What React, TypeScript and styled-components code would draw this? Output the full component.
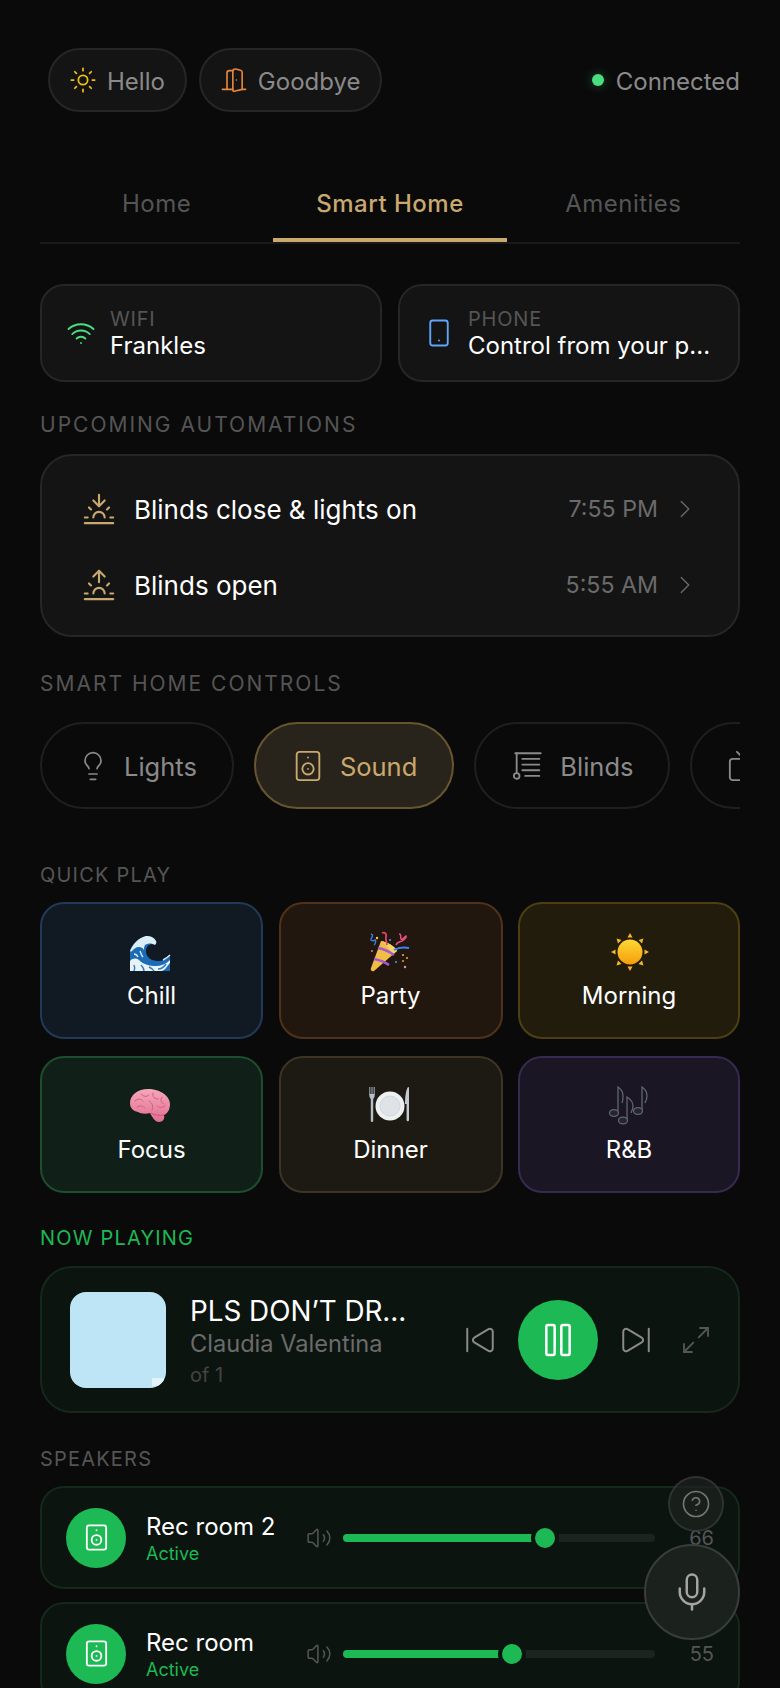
import React from "react";
import styled, { createGlobalStyle } from "styled-components";
import {
  Blinds,
  ChevronRight,
  CircleHelp,
  DoorOpen,
  Lightbulb,
  Maximize2,
  Mic,
  Pause,
  SkipBack,
  SkipForward,
  Smartphone,
  Speaker,
  Sun,
  Sunrise,
  Sunset,
  Tv,
  Volume2,
  Wifi,
} from "lucide-react";

const GOLD = "#c9a96e";
const GREEN = "#1db954";

const GlobalStyle = createGlobalStyle`
  html, body {
    margin: 0;
    padding: 0;
    background: #0a0a0a;
    overflow: hidden;
  }
  * {
    box-sizing: border-box;
  }
  body {
    font-family: "Inter", "Liberation Sans", sans-serif;
    color: #fff;
  }
`;

const Page = styled.div`
  position: relative;
  width: 780px;
  height: 1688px;
  padding: 48px 40px 0;
  overflow: hidden;
  background: #0a0a0a;
`;

const TopBar = styled.div`
  display: flex;
  align-items: center;
  justify-content: space-between;
  padding-left: 8px;
  height: 64px;
`;

const Greetings = styled.div`
  display: flex;
  gap: 12px;
`;

const GreetingPill = styled.div`
  display: flex;
  align-items: center;
  gap: 10px;
  height: 64px;
  padding: 0 20px 0 19px;
  border-radius: 32px;
  border: 2px solid #262626;
  background: #141414;
  color: #8a8a8a;
  font-size: 24px;
`;

const LoweredText = styled.span`
  padding-top: 2px;
`;

const Status = styled.div`
  display: flex;
  align-items: center;
  gap: 12px;
  color: #8a8a8a;
  font-size: 24px;
`;

const StatusDot = styled.span`
  width: 12px;
  height: 12px;
  border-radius: 50%;
  background: #4ade80;
  box-shadow: 0 0 12px rgba(74, 222, 128, 0.35);
`;

const Tabs = styled.div`
  display: grid;
  grid-template-columns: repeat(3, 1fr);
  margin-top: 58px;
  height: 74px;
  border-bottom: 2px solid #1a1a1a;
`;

const Tab = styled.div<{ $active?: boolean }>`
  display: flex;
  align-items: flex-start;
  justify-content: center;
  padding-top: 19px;
  font-size: 24px;
  font-weight: ${({ $active }) => ($active ? 500 : 400)};
  letter-spacing: 0.5px;
  color: ${({ $active }) => ($active ? GOLD : "#555")};
  border-bottom: 4px solid ${({ $active }) => ($active ? GOLD : "transparent")};
  height: 72px;
`;

const InfoRow = styled.div`
  display: grid;
  grid-template-columns: 1fr 1fr;
  gap: 16px;
  margin-top: 40px;
`;

const InfoCard = styled.div`
  display: flex;
  align-items: center;
  gap: 14px;
  height: 98px;
  padding: 0 24px;
  border-radius: 24px;
  border: 2px solid #262626;
  background: #141414;
`;

const InfoText = styled.div`
  display: flex;
  flex-direction: column;
  min-width: 0;
`;

const InfoLabel = styled.div`
  padding-top: 1px;
  font-size: 20px;
  line-height: 24px;
  letter-spacing: 0.8px;
  color: #555;
`;

const InfoValue = styled.div`
  font-size: 24px;
  line-height: 29px;
  white-space: nowrap;
`;

const SectionLabel = styled.div<{ $top: number; $bottom: number; $small?: boolean; $green?: boolean }>`
  margin-top: ${({ $top }) => $top}px;
  margin-bottom: ${({ $bottom }) => $bottom}px;
  font-size: ${({ $small }) => ($small ? 20 : 21)}px;
  line-height: 24px;
  letter-spacing: ${({ $small }) => ($small ? 1.2 : 2)}px;
  color: ${({ $green }) => ($green ? GREEN : "#555")};
`;

const AutomationCard = styled.div`
  height: 183px;
  padding: 15px 38px 0 40px;
  border-radius: 32px;
  border: 2px solid #262626;
  background: #141414;
`;

const AutomationRow = styled.div`
  height: 76px;
  display: flex;
  align-items: center;
  font-size: 26px;
`;

const AutomationName = styled.span`
  flex: 1;
  margin-left: 18px;
`;

const AutomationTime = styled.span`
  font-size: 23.2px;
  color: #6b6b6b;
`;

const Chevron = styled(ChevronRight)`
  margin-left: 12px;
  color: #6b6b6b;
`;

const ControlRow = styled.div`
  display: flex;
  gap: 20px;
  overflow: hidden;
`;

const ControlPill = styled.div<{ $active?: boolean }>`
  flex: none;
  display: flex;
  align-items: center;
  gap: 15px;
  height: 87px;
  padding: 0 35px;
  border-radius: 44px;
  border: 2px solid ${({ $active }) => ($active ? "#66552f" : "#1f1f1f")};
  background: ${({ $active }) => ($active ? "#29241b" : "transparent")};
  color: ${({ $active }) => ($active ? GOLD : "#8a8a8a")};
  font-size: 25.5px;
`;

const TileGrid = styled.div`
  display: grid;
  grid-template-columns: 223px 224px 222px;
  grid-auto-rows: 137px;
  justify-content: space-between;
  row-gap: 17px;
`;

const Tile = styled.div<{ $bg: string; $line: string }>`
  display: flex;
  flex-direction: column;
  align-items: center;
  justify-content: center;
  gap: 8px;
  padding-top: 3px;
  border-radius: 24px;
  border: 2px solid ${({ $line }) => $line};
  background: ${({ $bg }) => $bg};
  font-size: 24px;
  line-height: 30px;

  svg {
    overflow: visible;
  }
`;

const NowPlaying = styled.div`
  display: flex;
  align-items: center;
  height: 147px;
  padding: 0 26px 0 28px;
  border-radius: 32px;
  border: 2px solid #14291b;
  background: #0c1410;
`;

const Artwork = styled.div`
  position: relative;
  flex: none;
  width: 96px;
  height: 96px;
  border-radius: 16px;
  background: #bde5f5;
  overflow: hidden;
`;

const ArtworkMark = styled.span`
  position: absolute;
  right: 2px;
  bottom: 2px;
  width: 12px;
  height: 8px;
  background: #e3f3fa;
`;

const TrackInfo = styled.div`
  flex: 1;
  margin-left: 24px;
  min-width: 0;
`;

const TrackTitle = styled.div`
  padding-top: 1px;
  font-size: 27.8px;
  line-height: 34px;
  white-space: nowrap;
`;

const TrackArtist = styled.div`
  padding-top: 1px;
  font-size: 23.6px;
  line-height: 29px;
  color: #6b6b6b;
`;

const TrackCount = styled.div`
  margin-top: 5px;
  font-size: 20px;
  line-height: 24px;
  color: #444;
`;

const Controls = styled.div`
  display: flex;
  align-items: center;
  color: #8a8a8a;
`;

const PlayButton = styled.div`
  display: flex;
  align-items: center;
  justify-content: center;
  width: 80px;
  height: 80px;
  margin: 0 21px;
  border-radius: 50%;
  background: ${GREEN};
  color: #fff;
`;

const ExpandIcon = styled(Maximize2)`
  margin-left: 27px;
  color: #555;
`;

const SpeakerCard = styled.div`
  display: flex;
  align-items: center;
  height: 103px;
  margin-bottom: 13px;
  padding: 0 24px;
  border-radius: 24px;
  border: 2px solid #14291b;
  background: #0c1410;
`;

const SpeakerBadge = styled.div`
  flex: none;
  display: flex;
  align-items: center;
  justify-content: center;
  width: 60px;
  height: 60px;
  border-radius: 50%;
  background: ${GREEN};
  color: #fff;
`;

const SpeakerInfo = styled.div`
  width: 160px;
  margin-left: 20px;
`;

const SpeakerName = styled.div`
  padding-top: 1px;
  font-size: 24px;
  line-height: 29px;
  white-space: nowrap;
`;

const SpeakerState = styled.div`
  padding-top: 2px;
  font-size: 18px;
  line-height: 22px;
  color: ${GREEN};
`;

const VolumeIcon = styled(Volume2)`
  flex: none;
  color: #555;
`;

const Slider = styled.div`
  position: relative;
  width: 312px;
  height: 8px;
  margin-left: 11px;
  border-radius: 4px;
  background: #1c2420;
`;

const SliderFill = styled.div`
  height: 100%;
  border-radius: 4px;
  background: ${GREEN};
`;

const SliderThumb = styled.div`
  position: absolute;
  top: 50%;
  width: 20px;
  height: 20px;
  border-radius: 50%;
  background: ${GREEN};
  box-shadow: 0 0 0 4px #0c1410;
  transform: translate(-50%, -50%);
`;

const SpeakerValue = styled.div`
  flex: 1;
  text-align: right;
  font-size: 20px;
  color: #555;
`;

const HelpButton = styled.div`
  position: absolute;
  left: 668px;
  top: 1476px;
  display: flex;
  align-items: center;
  justify-content: center;
  width: 56px;
  height: 56px;
  border-radius: 50%;
  border: 2px solid rgba(90, 95, 92, 0.35);
  background: rgba(30, 34, 32, 0.7);
  color: #757575;
`;

const MicButton = styled.div`
  position: absolute;
  left: 644px;
  top: 1544px;
  display: flex;
  align-items: center;
  justify-content: center;
  width: 96px;
  height: 96px;
  border-radius: 50%;
  border: 2px solid #3a3e3b;
  background: #1b211d;
  color: #a5a5a5;
`;

function WaveEmoji() {
  return (
    <svg width="40" height="40" viewBox="2 -3 40 40">
      <path d="M0 35V14C3 8 8 2 16 0c4-.5 8 1 10 5l-1 4c-5-2-9 1-9 6 0 6 5 10 12 10 5 0 9-2 12-6v16z" fill="#1c6bb5" />
      <path d="M0 15C3 8 8 2 16 0c4 0 8 1 10 5 1 1 0 3-1 4-3-2-7-2-10 0-1 2-1 3-1 5-1-2-3-3-5-3-3 0-5 2-7 4-1 1-1 1-2 0z" fill="#dceef5" />
      <path d="M0 25c3-3 6-3 9-1 4 4 10 6 17 6 5 0 10-2 14-6v3c-3 3-5 8-9 8H0z" fill="#e8f3f7" />
      <path d="M4 29c1 2 1 4 0 6M11 29c2 2 3 4 3 6M19 31c2 1 4 2 5 4M28 33c3 0 6-2 8-5" stroke="#2c7cc4" strokeWidth="1.5" fill="none" />
      <path d="M4 18c2 0 3 1 4 3M10 15c1 2 1 4 3 6M33 24c2-1 4-2 7-5" stroke="#d7ebf4" strokeWidth="1.4" fill="none" />
    </svg>
  );
}

function PartyEmoji() {
  return (
    <svg width="40" height="40" viewBox="2 1 40 40">
      <path d="M2 36 12 9c6 1 14 5 16 10L5 39c-2 1-4-1-3-3z" fill="#efbe45" />
      <path d="M28 19 23 23C21 17 17 12 12 9c6 1 14 5 16 10z" fill="#f7d468" />
      <path d="M5 27c5 1 11 3 15 6M9 16c6 1 12 4 16 7" stroke="#a855d8" strokeWidth="2.6" fill="none" />
      <path d="M25 18c5-3 10-3 15-2" stroke="#3b82f6" strokeWidth="2" fill="none" />
      <path d="M13 1c3-1 5 1 4 4-1 3 1 5 1 8" stroke="#e2456b" strokeWidth="1.8" fill="none" />
      <path d="M2 2c3 1 1 3 0 5s3 2 4 1 1 4-1 5" stroke="#3b7fe0" strokeWidth="1.4" fill="none" />
      <path d="M30 2c3 0 1 4 2 5 2 1 4-3 5-3 1 1-2 4-4 5-3 1-5 1-6 4" stroke="#e24f80" strokeWidth="1.5" fill="none" />
      <circle cx="8" cy="6" r="1.2" fill="#f7c83c" />
      <circle cx="21" cy="8" r="1.1" fill="#4a90e8" />
      <circle cx="3" cy="19" r="1.1" fill="#e86a9a" />
      <circle cx="34" cy="23" r="1" fill="#f5b73d" />
      <circle cx="38" cy="26" r="1.1" fill="#f0a030" />
      <circle cx="27" cy="30" r="1.1" fill="#4a90e8" />
      <circle cx="34" cy="29" r="1" fill="#f0a030" />
      <circle cx="36" cy="35" r="1.2" fill="#ef8ab0" />
    </svg>
  );
}

function SunEmoji() {
  const rays = [0, 45, 90, 135, 180, 225, 270, 315];
  return (
    <svg width="40" height="40" viewBox="-1 0 40 40">
      <defs>
        <linearGradient id="sunFill" x1="0" y1="0" x2="0" y2="1">
          <stop offset="0" stopColor="#fdd835" />
          <stop offset="1" stopColor="#f59e0b" />
        </linearGradient>
      </defs>
      {rays.map((r) => (
        <path key={r} d="M17.500 4.500 20 0l2.500 4.500z" fill="#f8b62a" transform={`rotate(${r} 20 19)`} />
      ))}
      <circle cx="20" cy="19" r="12.500" fill="url(#sunFill)" />
    </svg>
  );
}

function BrainEmoji() {
  return (
    <svg width="40" height="40" viewBox="2 -2 40 40">
      <defs>
        <linearGradient id="brainFill" x1="0" y1="0" x2="0" y2="1">
          <stop offset="0" stopColor="#f6a6bc" />
          <stop offset="1" stopColor="#e26f90" />
        </linearGradient>
      </defs>
      <path d="M18 0C8 0 0 6 0 14c0 5 3 8 8 9 3 2 8 2 12 1 2 4 5 9 9 9 4 0 6-3 5-7 4-2 6-6 6-11C40 7 30 0 18 0z" fill="url(#brainFill)" />
      <path d="M5 12c3-3 6-2 8 0M11 5c2 3 6 3 8 1M23 4c-1 4 2 6 5 6M32 8c-2 3-1 6 2 7M7 18c3-2 6-1 8 1M19 12c3 2 5 5 3 9M27 17c2 2 5 2 8 0" stroke="#d0607f" strokeWidth="1" fill="none" strokeLinecap="round" />
      <path d="M21 24c3 2 8 3 13 2" stroke="#c9557a" strokeWidth="1" fill="none" />
    </svg>
  );
}

function PlateEmoji() {
  return (
    <svg width="40" height="40" viewBox="2 0 40 40">
      <path d="M.8 0v8M3 0v8M5.200 0v8" stroke="#a9b4bd" strokeWidth="1" />
      <path d="M.3 7c0 4 1 5 2.700 5s2.700-1 2.700-5z" fill="#b5bfc7" />
      <rect x="1.800" y="11" width="2.400" height="24" rx="1.200" fill="#b5bfc7" />
      <circle cx="21" cy="19" r="14.500" fill="#eef0f2" />
      <circle cx="21" cy="19" r="10" fill="#e0e3e6" stroke="#cdd8e4" strokeWidth="1" />
      <path d="M39 0c-2 3-3 9-3 17h1.600v16a1.200 1.200 0 0 0 2.400 0V1c0-1-.6-1.300-1-1z" fill="#c3cad0" />
    </svg>
  );
}

function NotesEmoji() {
  return (
    <svg width="40" height="40" viewBox="0 1 40 40" fill="none" stroke="#5f6570" strokeWidth="1.3">
      <path d="M9 26V1c3 2 5 5 5 9 0 2 0 5-1 7" />
      <path d="M18 34V11c3 2 6 5 6 9 0 3-1 5-2 7" />
      <path d="M33 24V1c3 2 5 5 5 9 0 3-1 5-2 7" />
      <ellipse cx="5" cy="27" rx="4.500" ry="3.400" fill="#23262d" />
      <ellipse cx="14" cy="34.500" rx="4.500" ry="3.400" fill="#23262d" />
      <ellipse cx="29" cy="25" rx="4.500" ry="3.400" fill="#23262d" />
    </svg>
  );
}

const tiles = [
  { name: "Chill", bg: "#111923", line: "#223a57", Emoji: WaveEmoji },
  { name: "Party", bg: "#21170f", line: "#4f3219", Emoji: PartyEmoji },
  { name: "Morning", bg: "#221c0d", line: "#4d3f12", Emoji: SunEmoji },
  { name: "Focus", bg: "#102018", line: "#1f4d2f", Emoji: BrainEmoji },
  { name: "Dinner", bg: "#1d1a14", line: "#3d3424", Emoji: PlateEmoji },
  { name: "R&B", bg: "#1b1623", line: "#372a50", Emoji: NotesEmoji },
];

const speakers = [
  { name: "Rec room 2", volume: 64.7, label: 66 },
  { name: "Rec room", volume: 54.3, label: 55 },
];

export default function App() {
  return (
    <Page>
      <GlobalStyle />
      <TopBar>
        <Greetings>
          <GreetingPill>
            <Sun size={28} color="#f0c010" strokeWidth={1.5} />
            <LoweredText>Hello</LoweredText>
          </GreetingPill>
          <GreetingPill>
            <DoorOpen size={28} color="#e8863a" strokeWidth={1.4} />
            <LoweredText>Goodbye</LoweredText>
          </GreetingPill>
        </Greetings>
        <Status>
          <StatusDot />
          <LoweredText>Connected</LoweredText>
        </Status>
      </TopBar>

      <Tabs>
        <Tab>Home</Tab>
        <Tab $active>Smart Home</Tab>
        <Tab>Amenities</Tab>
      </Tabs>

      <InfoRow>
        <InfoCard>
          <Wifi size={30} color="#4ade80" strokeWidth={1.5} />
          <InfoText>
            <InfoLabel>WIFI</InfoLabel>
            <InfoValue>Frankles</InfoValue>
          </InfoText>
        </InfoCard>
        <InfoCard>
          <Smartphone size={30} color="#60a5fa" strokeWidth={1.5} />
          <InfoText>
            <InfoLabel>PHONE</InfoLabel>
            <InfoValue>Control from your p...</InfoValue>
          </InfoText>
        </InfoCard>
      </InfoRow>

      <SectionLabel $top={31} $bottom={17}>UPCOMING AUTOMATIONS</SectionLabel>
      <AutomationCard>
        <AutomationRow>
          <Sunset size={34} color={GOLD} strokeWidth={1.5} />
          <AutomationName>Blinds close &amp; lights on</AutomationName>
          <AutomationTime>7:55 PM</AutomationTime>
          <Chevron size={30} strokeWidth={1} />
        </AutomationRow>
        <AutomationRow>
          <Sunrise size={34} color={GOLD} strokeWidth={1.5} />
          <AutomationName>Blinds open</AutomationName>
          <AutomationTime>5:55 AM</AutomationTime>
          <Chevron size={30} strokeWidth={1} />
        </AutomationRow>
      </AutomationCard>

      <SectionLabel $top={35} $bottom={26}>SMART HOME CONTROLS</SectionLabel>
      <ControlRow>
        <ControlPill>
          <Lightbulb size={32} strokeWidth={1.3} />
          <LoweredText>Lights</LoweredText>
        </ControlPill>
        <ControlPill $active>
          <Speaker size={34} strokeWidth={1.3} />
          <LoweredText>Sound</LoweredText>
        </ControlPill>
        <ControlPill>
          <Blinds size={34} strokeWidth={1.3} />
          <LoweredText>Blinds</LoweredText>
        </ControlPill>
        <ControlPill>
          <Tv size={34} strokeWidth={1.3} />
        </ControlPill>
      </ControlRow>

      <SectionLabel $small $top={54} $bottom={15}>QUICK PLAY</SectionLabel>
      <TileGrid>
        {tiles.map(({ name, bg, line, Emoji }) => (
          <Tile key={name} $bg={bg} $line={line}>
            <Emoji />
            {name}
          </Tile>
        ))}
      </TileGrid>

      <SectionLabel $small $green $top={33} $bottom={16}>NOW PLAYING</SectionLabel>
      <NowPlaying>
        <Artwork>
          <ArtworkMark />
        </Artwork>
        <TrackInfo>
          <TrackTitle>PLS DON’T DR...</TrackTitle>
          <TrackArtist>Claudia Valentina</TrackArtist>
          <TrackCount>of 1</TrackCount>
        </TrackInfo>
        <Controls>
          <SkipBack size={34} strokeWidth={1.4} />
          <PlayButton>
            <Pause size={40} strokeWidth={1.5} />
          </PlayButton>
          <SkipForward size={34} strokeWidth={1.4} />
          <ExpandIcon size={32} strokeWidth={1.4} />
        </Controls>
      </NowPlaying>

      <SectionLabel $small $top={34} $bottom={15}>SPEAKERS</SectionLabel>
      {speakers.map((s) => (
        <SpeakerCard key={s.name}>
          <SpeakerBadge>
            <Speaker size={29} strokeWidth={1.5} />
          </SpeakerBadge>
          <SpeakerInfo>
            <SpeakerName>{s.name}</SpeakerName>
            <SpeakerState>Active</SpeakerState>
          </SpeakerInfo>
          <VolumeIcon size={26} strokeWidth={1.4} />
          <Slider>
            <SliderFill style={{ width: `${s.volume}%` }} />
            <SliderThumb style={{ left: `${s.volume}%` }} />
          </Slider>
          <SpeakerValue>{s.label}</SpeakerValue>
        </SpeakerCard>
      ))}

      <HelpButton>
        <CircleHelp size={30} strokeWidth={1.3} />
      </HelpButton>
      <MicButton>
        <Mic size={42} strokeWidth={1.4} />
      </MicButton>
    </Page>
  );
}
